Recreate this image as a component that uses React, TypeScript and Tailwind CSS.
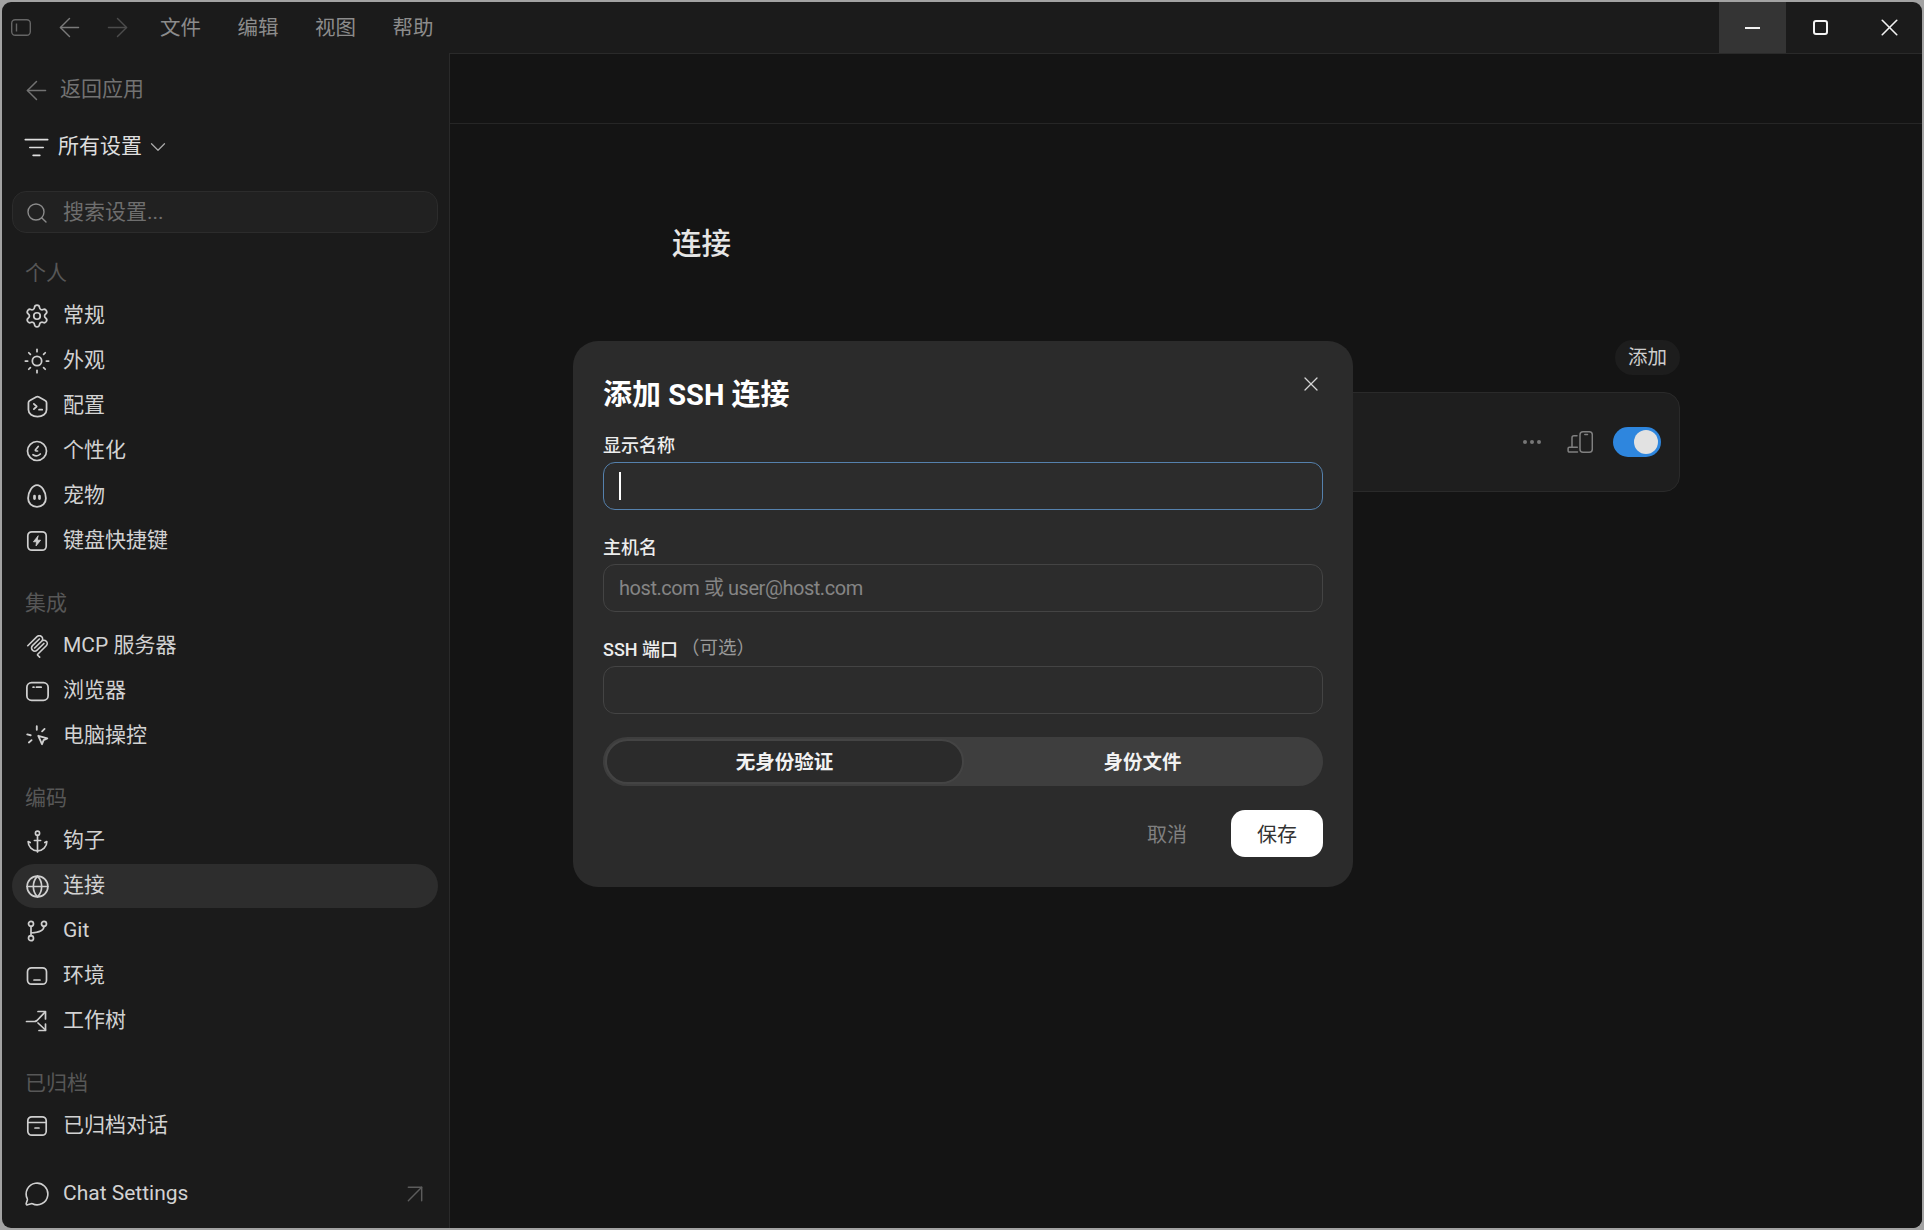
import React from 'react';
import {
  Anchor,
  ArrowLeft,
  ArrowRight,
  ArrowUpRight,
  ChevronDown,
  Globe,
  ListFilter,
  MessageCircle,
  Search,
  Settings,
  Sun,
  X,
} from 'lucide-react';

const Svg = ({ children, className = 'h-[24px] w-[24px]' }: { children: React.ReactNode; className?: string }) => (
  <svg
    viewBox="0 0 24 24"
    fill="none"
    stroke="currentColor"
    strokeWidth={1.700}
    strokeLinecap="round"
    strokeLinejoin="round"
    className={`shrink-0 ${className}`}
  >
    {children}
  </svg>
);

const ShieldIcon = () => (
  <Svg className="h-[25px] w-[25px]">
    <path d="M10.700 2.900a2.800 2.800 0 0 1 2.600 0l6 3.300a2.600 2.600 0 0 1 1.400 2.300V15c0 4-3.900 6.700-8.700 6.700S3.300 19 3.300 15V8.500a2.600 2.600 0 0 1 1.400-2.300z" />
    <path d="M8.500 9.500l2.700 2.500-2.700 2.500M13.500 15h3" />
  </Svg>
);
const WinkIcon = () => (
  <Svg>
    <circle cx="12" cy="12" r="9.500" />
    <path d="M13.200 7.500l-2.700 3.300c-.4.600 0 1.200.7 1.200h1.300" />
    <path d="M8 15.700c2.300 1.500 5.300 1.300 7.300-.7" />
  </Svg>
);
const EggIcon = () => (
  <Svg className="h-[26px] w-[26px]">
    <path d="M12 2C7.800 2 3.800 8.300 3.800 14c0 4.700 3.300 8 8.200 8s8.200-3.300 8.200-8C20.200 8.300 16.200 2 12 2z" />
    <path d="M9.700 12.200v2.200M14.300 12.200v2.200" strokeWidth={2.500} />
  </Svg>
);
const BoltIcon = () => (
  <Svg>
    <rect x="2.800" y="2.800" width="18.400" height="18.400" rx="4" />
    <path d="M13 7l-4.600 5.800h3.100L11 17l4.600-5.800h-3.100z" fill="currentColor" strokeWidth={0.800} />
  </Svg>
);
const McpIcon = () => (
  <svg viewBox="0 0 24 24" fill="currentColor" className="h-[23px] w-[23px] shrink-0">
    <path d="M15.688 2.343a2.588 2.588 0 00-3.61 0l-9.626 9.44a.863.863 0 01-1.203 0 .823.823 0 010-1.18l9.626-9.44a4.313 4.313 0 016.016 0 4.116 4.116 0 011.204 3.54 4.3 4.3 0 013.609 1.18l.05.05a4.115 4.115 0 010 5.9l-8.706 8.537a.274.274 0 000 .393l1.788 1.754a.823.823 0 010 1.18.863.863 0 01-1.203 0l-1.788-1.753a1.92 1.92 0 010-2.754l8.706-8.538a2.47 2.47 0 000-3.54l-.05-.049a2.588 2.588 0 00-3.607-.003l-7.172 7.034-.002.002-.098.097a.863.863 0 01-1.204 0 .823.823 0 010-1.18l7.273-7.133a2.47 2.47 0 00-.003-3.537z" />
    <path d="M14.485 4.703a.823.823 0 000-1.18.863.863 0 00-1.204 0l-7.119 6.982a4.115 4.115 0 000 5.900 4.314 4.314 0 006.016 0l7.120-6.982a.823.823 0 000-1.180.863.863 0 00-1.204 0l-7.119 6.982a2.588 2.588 0 01-3.610 0 2.470 2.470 0 010-3.540l7.120-6.982z" />
  </svg>
);
const BrowserIcon = () => (
  <Svg className="h-[25px] w-[25px]">
    <rect x="1.800" y="3.500" width="20.400" height="17" rx="4.500" />
    <path d="M7.800 7.800h.8M11 7.800h4.500" />
  </Svg>
);
const PointerIcon = () => (
  <Svg className="h-[26px] w-[26px]">
    <path d="M13.200 11.800l8.300 2.500-3.400 1.500-1.500 3.800z" />
    <path d="M11.800 3v3.200M19 5.500l-2.300 2.200M3 10.500l3.200.8M4.500 18l2.500-2.200" />
  </Svg>
);
const GitIcon = () => (
  <Svg>
    <circle cx="6" cy="4.800" r="2.500" />
    <circle cx="6" cy="19.200" r="2.500" />
    <circle cx="19" cy="4.800" r="2.500" />
    <path d="M6 7.300v9.400M19 7.300c0 4-3.500 6.200-13 6.700" />
  </Svg>
);
const EnvIcon = () => (
  <Svg>
    <rect x="2.500" y="3.800" width="19" height="16.400" rx="4" />
    <path d="M9 16h6" />
  </Svg>
);
const WorktreeIcon = () => (
  <Svg>
    <path d="M1.500 12.500h8c1 0 1.800-.4 2.500-1L20 3.200" />
    <path d="M13 2.500h7.500V10" />
    <path d="M13 14l7.500 7" />
    <path d="M20.500 15v6.500H14" />
  </Svg>
);
const ArchiveIcon = () => (
  <Svg>
    <rect x="2.800" y="2.800" width="18.400" height="18.400" rx="4" />
    <path d="M2.800 8.500h18.400M10 14h4" />
  </Svg>
);
const DeviceIcon = () => (
  <svg
    viewBox="0 0 26 22"
    fill="none"
    stroke="currentColor"
    strokeWidth={1.500}
    strokeLinecap="round"
    strokeLinejoin="round"
    className="h-[22px] w-[26px]"
  >
    <rect x="13" y="0.800" width="12.300" height="20.400" rx="3" />
    <path d="M17.800 3.600h2.700" />
    <path d="M10 4.800H7a2 2 0 0 0-2 2v9.500" />
    <path d="M10.500 21H2.300a1.200 1.200 0 0 1-1.200-1.200v-2.300a1.200 1.200 0 0 1 1.200-1.200h8" />
  </svg>
);

type NavItem = { label: string; icon: React.ReactNode; active?: boolean };
type NavGroup = { title: string; items: NavItem[] };

const groups: NavGroup[] = [
  {
    title: '个人',
    items: [
      { label: '常规', icon: <Settings className="h-[26px] w-[26px] shrink-0" strokeWidth={1.600} /> },
      { label: '外观', icon: <Sun className="h-[28px] w-[28px] shrink-0" strokeWidth={1.500} /> },
      { label: '配置', icon: <ShieldIcon /> },
      { label: '个性化', icon: <WinkIcon /> },
      { label: '宠物', icon: <EggIcon /> },
      { label: '键盘快捷键', icon: <BoltIcon /> },
    ],
  },
  {
    title: '集成',
    items: [
      { label: 'MCP 服务器', icon: <McpIcon /> },
      { label: '浏览器', icon: <BrowserIcon /> },
      { label: '电脑操控', icon: <PointerIcon /> },
    ],
  },
  {
    title: '编码',
    items: [
      { label: '钩子', icon: <Anchor className="h-[25px] w-[25px] shrink-0" strokeWidth={1.600} /> },
      { label: '连接', icon: <Globe className="h-[25px] w-[25px] shrink-0" strokeWidth={1.600} />, active: true },
      { label: 'Git', icon: <GitIcon /> },
      { label: '环境', icon: <EnvIcon /> },
      { label: '工作树', icon: <WorktreeIcon /> },
    ],
  },
  {
    title: '已归档',
    items: [{ label: '已归档对话', icon: <ArchiveIcon /> }],
  },
];

const NavRow = ({ item }: { item: NavItem }) => (
  <div
    className={`flex h-[44px] items-center gap-[14px] rounded-full pl-[13px] text-[21px] text-[#d2d2d2] ${
      item.active ? 'bg-[#2d2d2d]' : ''
    }`}
  >
    <span className="flex w-[24px] shrink-0 justify-center text-[#cfcfcf]">{item.icon}</span>
    <span>{item.label}</span>
  </div>
);

const Sidebar = () => (
  <aside className="flex w-[447px] shrink-0 flex-col pb-[12px] pl-[10px] pr-[11px] pt-[15px]">
    <div className="flex h-[44px] items-center gap-[8px] pl-[9px] text-[21px] text-[#727272]">
      <ArrowLeft className="h-[31px] w-[31px] shrink-0" strokeWidth={1.150} />
      <span>返回应用</span>
    </div>
    <div className="mt-[13px] flex h-[44px] items-center pl-[11px] text-[21px] text-[#dedede]">
      <ListFilter className="mr-[8px] h-[27px] w-[27px] shrink-0" strokeWidth={1.400} />
      <span>所有设置</span>
      <ChevronDown className="ml-[3px] h-[26px] w-[26px] shrink-0 text-[#a8a8a8]" strokeWidth={1.200} />
    </div>
    <div className="mt-[22px] flex h-[42px] items-center gap-[14px] rounded-[14px] border border-[#2c2c2c] bg-[#212121] pl-[12px] pt-[2px] text-[21px] text-[#6e6e6e]">
      <Search className="h-[24px] w-[24px] shrink-0 text-[#8a8a8a]" strokeWidth={1.400} />
      <span>搜索设置...</span>
    </div>
    <div className="mt-[20px] flex flex-col gap-[20px]">
      {groups.map((group) => (
        <section key={group.title}>
          <div className="flex h-[41px] items-center pl-[13px] text-[21px] text-[#575757]">{group.title}</div>
          <div className="flex flex-col gap-px">
            {group.items.map((item) => (
              <NavRow key={item.label} item={item} />
            ))}
          </div>
        </section>
      ))}
    </div>
    <div className="mt-auto flex h-[44px] items-center gap-[14px] pl-[13px] pr-[7px] text-[21px] text-[#d2d2d2]">
      <span className="flex w-[24px] shrink-0 justify-center text-[#cfcfcf]">
        <MessageCircle className="h-[26px] w-[26px] shrink-0" strokeWidth={1.500} />
      </span>
      <span>Chat Settings</span>
      <ArrowUpRight className="ml-auto h-[32px] w-[32px] shrink-0 text-[#5c5c5c]" strokeWidth={1.100} />
    </div>
  </aside>
);

const TitleBar = () => (
  <header className="flex h-[51px] shrink-0 items-center">
    <svg viewBox="0 0 20 17" fill="none" stroke="currentColor" strokeWidth={1.400} className="ml-[9px] h-[17px] w-[20px] shrink-0 text-[#666666]">
      <rect x="0.700" y="0.700" width="18.600" height="15.600" rx="3.500" />
      <path d="M5.500 4.500v8" />
    </svg>
    <ArrowLeft className="ml-[23px] h-[31px] w-[31px] shrink-0 text-[#7a7a7a]" strokeWidth={1.100} />
    <ArrowRight className="ml-[17px] h-[31px] w-[31px] shrink-0 text-[#4c4c4c]" strokeWidth={1.100} />
    <nav className="ml-[27px] mt-[2px] flex gap-[36.500px] text-[20.500px] text-[#8c8c8c]">
      <span>文件</span>
      <span>编辑</span>
      <span>视图</span>
      <span>帮助</span>
    </nav>
    <div className="ml-auto flex h-full text-[#f2f2f2]">
      <div className="flex w-[67px] items-center justify-center bg-[#343434]">
        <span className="h-[2px] w-[15px] bg-[#f2f2f2]" />
      </div>
      <div className="flex w-[69px] items-center justify-center">
        <span className="h-[15px] w-[15px] rounded-[3px] border-[2px] border-[#f2f2f2]" />
      </div>
      <div className="flex w-[67px] items-center justify-center pl-[2px]">
        <X className="h-[29px] w-[29px] shrink-0" strokeWidth={1.350} />
      </div>
    </div>
  </header>
);

const Main = () => (
  <main className="flex-1 border-l border-t border-[#2a2a2a] bg-[#141414]">
    <div className="h-[70px] border-b border-[#262626]" />
    <div className="ml-[222px] w-[1008px] pt-[100px]">
      <h1 className="flex h-[40px] items-center text-[29.500px] font-medium text-[#e6e6e6]">连接</h1>
      <div className="mt-[76px] flex justify-end">
        <span className="flex h-[35px] w-[65px] items-center justify-center rounded-full bg-[#1d1d1d] text-[19.500px] text-[#cdcdcd]">
          添加
        </span>
      </div>
      <div className="mt-[17px] flex h-[100px] items-center justify-end rounded-[16px] border border-[#2a2a2a] bg-[#1e1e1e] pr-[18px]">
        <span className="flex gap-[3px]">
          <i className="h-[4px] w-[4px] rounded-full bg-[#777777]" />
          <i className="h-[4px] w-[4px] rounded-full bg-[#777777]" />
          <i className="h-[4px] w-[4px] rounded-full bg-[#777777]" />
        </span>
        <span className="ml-[26px] text-[#808080]">
          <DeviceIcon />
        </span>
        <span className="ml-[20px] flex h-[30px] w-[48px] items-center justify-end rounded-full bg-[#2e86de] pr-[3px]">
          <span className="h-[24px] w-[24px] rounded-full bg-[#e2e2e2]" />
        </span>
      </div>
    </div>
  </main>
);

const Field = ({
  label,
  hint,
  placeholder,
  focused,
}: {
  label: string;
  hint?: string;
  placeholder?: string;
  focused?: boolean;
}) => (
  <div>
    <div className="flex h-[22px] items-center pt-[2px] text-[18px] font-medium text-[#ededed]">
      {label}
      {hint && <span className="ml-[3px] text-[18.500px] font-normal text-[#9a9a9a]">{hint}</span>}
    </div>
    <div className="relative mt-[7px]">
      <input
        readOnly
        placeholder={placeholder}
        className={`h-[48px] w-full rounded-[12px] border bg-[#2c2c2c] px-[15px] text-[20px] tracking-[-0.450px] outline-none placeholder:text-[#858585] ${
          focused ? 'border-[#5581ad]' : 'border-[#444444]'
        }`}
      />
      {focused && <span className="absolute left-[16px] top-[10px] h-[28px] w-[1.500px] bg-white" />}
    </div>
  </div>
);

const Dialog = () => (
  <div className="fixed inset-0 flex items-center justify-center pb-[2px] pl-[2px]">
    <div className="relative flex h-[546px] w-[780px] flex-col rounded-[25px] bg-[#2b2b2b] px-[30px] pt-[35px]">
      <h2 className="flex h-[36px] items-center pt-[4px] text-[29px] font-bold text-white">添加 SSH 连接</h2>
      <X className="absolute right-[30px] top-[31px] h-[24px] w-[24px] text-[#d5d5d5]" strokeWidth={1.300} />
      <div className="mt-[21px] flex flex-col gap-[25px]">
        <Field label="显示名称" focused />
        <Field label="主机名" placeholder="host.com 或 user@host.com" />
        <Field label="SSH 端口" hint="（可选）" />
      </div>
      <div className="mt-[23px] flex h-[49px] rounded-full bg-[#3e3e3e] p-[2px] text-[19.500px] font-bold text-[#f2f2f2]">
        <div className="flex w-[359px] items-center justify-center rounded-full border-[2px] border-[#444444] bg-[#2b2b2b] pt-[2px]">
          无身份验证
        </div>
        <div className="flex flex-1 items-center justify-center pt-[2px]">身份文件</div>
      </div>
      <div className="mt-[24px] flex items-center justify-end gap-[44px] text-[20px]">
        <span className="pt-[2px] text-[#808080]">取消</span>
        <span className="flex h-[47px] w-[92px] items-center justify-center rounded-[14px] bg-white pt-[2px] text-[#333333]">保存</span>
      </div>
    </div>
  </div>
);

export default function App() {
  return (
    <div className="h-screen w-screen overflow-hidden bg-[#a3a3a3] p-[2px] font-['Roboto','Noto_Sans_CJK_SC',sans-serif]">
      <div className="flex h-full flex-col overflow-hidden rounded-[9px] bg-[#1b1b1b]">
        <TitleBar />
        <div className="flex min-h-0 flex-1">
          <Sidebar />
          <Main />
        </div>
      </div>
      <Dialog />
    </div>
  );
}
